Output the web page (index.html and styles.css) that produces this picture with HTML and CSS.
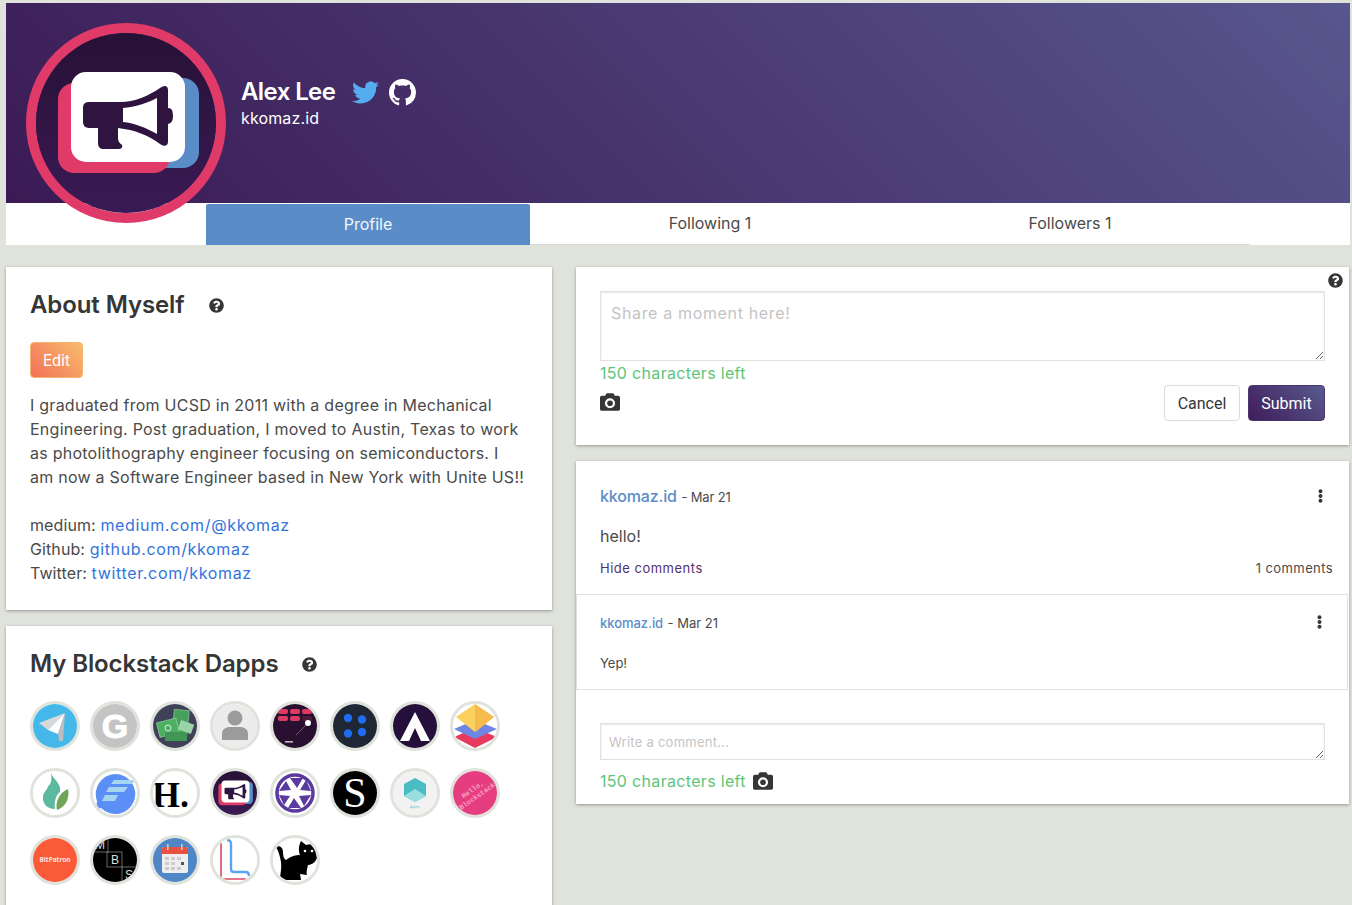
FILE: index.html
```html
<!DOCTYPE html>
<html lang="en">
<head>
  <meta charset="UTF-8" />
  <meta name="viewport" content="width=device-width, initial-scale=1.0" />
  <title>Alex Lee - Profile</title>
  <link rel="stylesheet" href="styles.css">
</head>
<body>

<!-- Shared icons -->
<svg class="sprite" aria-hidden="true">
  <symbol id="i-question" viewBox="0 0 512 512"><path d="M504 256c0 136.997-111.043 248-248 248S8 392.997 8 256C8 119.083 119.043 8 256 8s248 111.083 248 248zM262.655 90c-54.497 0-89.255 22.957-116.549 63.758-3.536 5.286-2.353 12.415 2.715 16.258l34.699 26.31c5.205 3.947 12.621 3.008 16.665-2.122 17.864-22.658 30.113-35.797 57.303-35.797 20.429 0 45.698 13.148 45.698 32.958 0 14.976-12.363 22.667-32.534 33.976C247.128 238.528 216 254.941 216 296v4c0 6.627 5.373 12 12 12h56c6.627 0 12-5.373 12-12v-1.333c0-28.462 83.186-29.647 83.186-106.667 0-58.002-60.165-102-116.531-102zM256 338c-25.365 0-46 20.635-46 46 0 25.364 20.635 46 46 46s46-20.636 46-46c0-25.365-20.635-46-46-46z"/></symbol>
  <symbol id="i-camera" viewBox="0 0 512 512"><path fill-rule="evenodd" d="M512 144v288c0 26.500-21.500 48-48 48H48c-26.500 0-48-21.500-48-48V144c0-26.500 21.500-48 48-48h88l12.300-32.900c7-18.700 24.900-31.100 44.900-31.100h125.500c20 0 37.900 12.400 44.900 31.100L376 96h88c26.500 0 48 21.500 48 48zM386 288a130 130 0 1 0-260 0a130 130 0 1 0 260 0z"/><circle cx="256" cy="288" r="72"/></symbol>
  <symbol id="i-dots" viewBox="0 0 192 512"><path d="M96 184c39.800 0 72 32.200 72 72s-32.200 72-72 72-72-32.200-72-72 32.200-72 72-72zM24 80c0 39.800 32.200 72 72 72s72-32.200 72-72S135.800 8 96 8 24 40.200 24 80zm0 352c0 39.800 32.200 72 72 72s72-32.200 72-72-32.200-72-72-72-72 32.200-72 72z"/></symbol>
  <linearGradient id="avatar-bg" x1="0" y1="0" x2="0" y2="1"><stop offset="0" stop-color="#271136"/><stop offset="1" stop-color="#3a1a54"/></linearGradient>
  <symbol id="i-logo" viewBox="36 33 180 180">
    <rect x="36" y="33" width="180" height="180" fill="url(#avatar-bg)"/>
    <rect x="110" y="78" width="89" height="90" rx="16" fill="#5a8dc8"/>
    <rect x="58" y="83" width="112" height="90" rx="16" fill="#e03a68"/>
    <rect x="71" y="72" width="114" height="90" rx="15" fill="#fff"/>
    <path fill="#2f1440" fill-rule="evenodd" d="M89 102H120C135 102 148 96 160 88C164 85 168 85 168 90V108C172 108 173 111 173 116C173 120 172 123 168 124V142C168 146 164 147 160 144C148 135 135 130 118 128V138C118 142 120 143 122 145C123 148 121 149 118 149H104C100 149 98 147 98 143V128H89C85 128 83 125 83 122V108C83 104 85 102 89 102ZM123 108C135 107 148 103 157 98V134C146 128 135 123 123 122Z"/>
  </symbol>
</svg>

<div class="page">

  <!-- Header -->
  <header class="profile-header">
    <div class="profile-info">
      <div class="profile-name">
        <h1>Alex Lee</h1>
        <svg class="twitter" viewBox="0 0 512 512"><path d="M459.370 151.716c.325 4.548.325 9.097.325 13.645 0 138.720-105.583 298.558-298.558 298.558-59.452 0-114.680-17.219-161.137-47.106 8.447.974 16.568 1.299 25.340 1.299 49.055 0 94.213-16.568 130.274-44.832-46.132-.975-84.792-31.188-98.112-72.772 6.498.974 12.995 1.624 19.818 1.624 9.421 0 18.843-1.300 27.614-3.573-48.081-9.747-84.143-51.980-84.143-102.985v-1.299c13.969 7.797 30.214 12.670 47.431 13.319-28.264-18.843-46.781-51.005-46.781-87.391 0-19.492 5.197-37.360 14.294-52.954 51.655 63.675 129.300 105.258 216.365 109.807-1.624-7.797-2.599-15.918-2.599-24.040 0-57.828 46.782-104.934 104.934-104.934 30.213 0 57.502 12.670 76.670 33.137 23.715-4.548 46.456-13.320 66.599-25.340-7.798 24.366-24.366 44.833-46.132 57.827 21.117-2.273 41.584-8.122 60.426-16.243-14.292 20.791-32.161 39.308-52.628 54.253z"/></svg>
        <svg class="github" viewBox="0 0 16 16"><path d="M8 0C3.580 0 0 3.580 0 8c0 3.540 2.290 6.530 5.470 7.590.400.070.550-.170.550-.380 0-.190-.010-.820-.010-1.490-2.010.370-2.530-.490-2.690-.940-.090-.230-.480-.940-.820-1.130-.280-.150-.680-.520-.010-.530.630-.010 1.080.580 1.230.820.720 1.210 1.870.870 2.330.660.070-.520.280-.870.510-1.070-1.780-.200-3.640-.890-3.640-3.950 0-.870.310-1.590.820-2.150-.080-.200-.360-1.020.080-2.120 0 0 .670-.210 2.200.820.640-.180 1.320-.270 2-.270.680 0 1.360.090 2 .270 1.530-1.040 2.200-.820 2.200-.820.440 1.100.160 1.920.080 2.120.510.560.820 1.270.820 2.150 0 3.070-1.870 3.750-3.650 3.950.290.250.540.730.540 1.480 0 1.070-.010 1.930-.010 2.200 0 .210.150.460.550.380A8.013 8.013 0 0016 8c0-4.420-3.580-8-8-8z"/></svg>
      </div>
      <div class="profile-id">kkomaz.id</div>
    </div>
  </header>

  <svg class="avatar" viewBox="0 0 180 180"><use href="#i-logo"/></svg>

  <!-- Tabs -->
  <nav class="tabs">
    <a class="tab active">Profile</a>
    <a class="tab">Following 1</a>
    <a class="tab">Followers 1</a>
  </nav>

  <div class="columns">

    <!-- Left column -->
    <div class="col-left">
      <section class="card about">
        <h2 class="card-title">About Myself <svg class="help"><use href="#i-question"/></svg></h2>
        <button class="btn btn-edit">Edit</button>
        <p class="bio">I graduated from UCSD in 2011 with a degree in Mechanical Engineering. Post graduation, I moved to Austin, Texas to work as photolithography engineer focusing on semiconductors. I am&nbsp;now a Software Engineer based in New York with Unite US!!</p>
        <p class="bio-links">
          medium: <a href="#">medium.com/@kkomaz</a><br>
          Github: <a href="#">github.com/kkomaz</a><br>
          Twitter: <a href="#">twitter.com/kkomaz</a>
        </p>
      </section>

      <section class="card dapps">
        <h2 class="card-title">My Blockstack Dapps <svg class="help"><use href="#i-question"/></svg></h2>
        <div class="dapp-grid">
          <!-- paper plane -->
          <svg class="dapp" viewBox="0 0 44 44"><rect width="44" height="44" fill="#45b8ea"/><path d="M6 19L32 9L15 26Z" fill="#d8d8d8"/><path d="M32 9L15 26L25 30Z" fill="#fff"/><path d="M32 9L25 30L26 37L30 37Z" fill="#bdbdbd"/></svg>
          <!-- G -->
          <svg class="dapp" viewBox="0 0 44 44"><rect width="44" height="44" fill="#c4c4c4"/><text class="g-mark" x="22" y="34" text-anchor="middle">G</text></svg>
          <!-- money -->
          <svg class="dapp" viewBox="0 0 44 44"><rect width="44" height="44" fill="#3e4158"/><rect x="20" y="6" width="15" height="27" fill="#45a05a" stroke="#b8dfc0" stroke-width=".5" transform="rotate(6 28 19)"/><rect x="5" y="16" width="20" height="15" fill="#4caf62" stroke="#b8dfc0" stroke-width=".5" transform="rotate(-14 16 24)"/><rect x="12" y="28" width="22" height="9" fill="#3f9655"/><rect x="26" y="18" width="14" height="10" fill="#9ad4a8" transform="rotate(20 33 23)"/><circle cx="15" cy="24" r="3" fill="none" stroke="#d8efdc"/></svg>
          <!-- person -->
          <svg class="dapp" viewBox="0 0 44 44"><rect width="44" height="44" fill="#ececec"/><circle cx="22" cy="14" r="7.500" fill="#9b9b9b"/><path d="M9 36V30C9 25 13 23 17 23H27C31 23 35 25 35 30V36Z" fill="#9b9b9b"/></svg>
          <!-- bricks -->
          <svg class="dapp" viewBox="0 0 44 44"><rect width="44" height="44" fill="#2a1030"/><g fill="#dc3a63"><rect x="5" y="5" width="10" height="5" rx="2"/><rect x="17" y="5" width="10" height="5" rx="2"/><rect x="29" y="5" width="10" height="5" rx="2"/><rect x="5" y="12" width="10" height="5" rx="2"/><rect x="17" y="12" width="10" height="5" rx="2"/></g><rect x="29" y="12" width="10" height="5" rx="2" fill="#4b1c3a"/><path d="M34 20L23 31" stroke="#6d5a70"/><circle cx="35" cy="19" r="3" fill="#fff"/><rect x="12" y="37" width="8" height="1.600" fill="#bbb"/></svg>
          <!-- four dots -->
          <svg class="dapp" viewBox="0 0 44 44"><rect width="44" height="44" fill="#1e2733"/><g fill="#1f6cf0"><circle cx="15" cy="14" r="4.200"/><circle cx="29" cy="15.500" r="4.200"/><circle cx="15" cy="29.500" r="4.200"/><circle cx="29" cy="28" r="4.200"/></g></svg>
          <!-- A mark -->
          <svg class="dapp" viewBox="0 0 44 44"><rect width="44" height="44" fill="#24103a"/><path d="M22 8L37 37H28L22 24L16 37H7Z" fill="#fff"/></svg>
          <!-- layers -->
          <svg class="dapp" viewBox="0 0 44 44"><rect width="44" height="44" fill="#fff"/><path d="M22 24L44 33L22 44L1 33Z" fill="#e8395f"/><path d="M22 16L44 25L22 35L1 25Z" fill="#6f87e2"/><path d="M22 0L41 13L22 28L3 13Z" fill="#fbd05c"/><path d="M22 0L41 13L22 28Z" fill="#f6bb4d"/></svg>
          <!-- flame -->
          <svg class="dapp" viewBox="0 0 44 44"><rect width="44" height="44" fill="#fff"/><path d="M18 2C20 8 29 13 27 21C23 24 21 30 22 38C14 38 9 32 10 25C11 20 14 20 15 15C18 14 19 8 18 2Z" fill="#5cb89f"/><path d="M35 18C37 26 33 36 24 39C22 31 26 22 35 18Z" fill="#6fa556"/></svg>
          <!-- blue chat -->
          <svg class="dapp" viewBox="0 0 44 44"><rect width="44" height="44" fill="#fff"/><path d="M22 3A20 20 0 1 1 8 37L3 39L4 30A20 20 0 0 1 22 3Z" fill="#5c8ff5"/><g fill="#a5d5f0"><path d="M21 9H44L39 13H18Z"/><path d="M16 16H35L31 21H13Z"/><path d="M12 24H25L22 30H9Z"/></g></svg>
          <!-- H. -->
          <svg class="dapp" viewBox="0 0 44 44"><rect width="44" height="44" fill="#fff"/><text class="h-mark" x="-1" y="36">H.</text></svg>
          <!-- own logo -->
          <svg class="dapp" viewBox="0 0 180 180"><use href="#i-logo"/></svg>
          <!-- aperture -->
          <svg class="dapp" viewBox="0 0 44 44"><rect width="44" height="44" fill="#fff"/><circle cx="22" cy="22" r="18" fill="none" stroke="#5b3aa0" stroke-width="3.500"/><g fill="#5b3aa0"><path d="M17 7H30L24 17Z"/><path d="M33 9L38 20L27 19Z"/><path d="M38 24L31 35L26 25Z"/><path d="M28 37H15L21 27Z"/><path d="M11 34L6 24L17 25Z"/><path d="M6 20L13 10L18 19Z"/></g></svg>
          <!-- S -->
          <svg class="dapp" viewBox="0 0 44 44"><rect width="44" height="44" fill="#000"/><text class="s-mark" x="22" y="36" text-anchor="middle">S</text></svg>
          <!-- Apex -->
          <svg class="dapp" viewBox="0 0 44 44"><rect width="44" height="44" fill="#f2f2f2"/><path d="M22 7L33 13V25L22 31L11 25V13Z" fill="#4cbcc4"/><path d="M22 18L33 25L22 31L11 25Z" fill="#9adfe0"/><text class="apex-mark" x="22" y="37" text-anchor="middle">Apex</text></svg>
          <!-- Hello Blockstack -->
          <svg class="dapp" viewBox="0 0 44 44"><rect width="44" height="44" fill="#e63d80"/><g transform="rotate(-35 22 22)"><text class="hello-mark" x="22" y="20" text-anchor="middle">Hello,</text><text class="hello-mark" x="22" y="28" text-anchor="middle">Blockstack</text></g></svg>
          <!-- BitPatron -->
          <svg class="dapp" viewBox="0 0 44 44"><rect width="44" height="44" fill="#fb5a38"/><text class="bit-mark" x="22" y="24" text-anchor="middle">BitPatron</text></svg>
          <!-- MBS -->
          <svg class="dapp" viewBox="0 0 44 44"><rect width="44" height="44" fill="#000"/><g fill="none" stroke="#aaa" stroke-width=".6"><rect x="0" y="0" width="15" height="14"/><rect x="14" y="14" width="15" height="15"/><rect x="29" y="29" width="15" height="15"/></g><text class="mbs-mark" x="7" y="11" text-anchor="middle">M</text><text class="mbs-mark" x="22" y="26" text-anchor="middle">B</text><text class="mbs-mark" x="36" y="41" text-anchor="middle">S</text></svg>
          <!-- calendar -->
          <svg class="dapp" viewBox="0 0 44 44"><rect width="44" height="44" fill="#4f86c6"/><rect x="9" y="9" width="26" height="26" rx="2" fill="#eee"/><path d="M9 16V11A2 2 0 0 1 11 9H33A2 2 0 0 1 35 11V16Z" fill="#e8503f"/><rect x="14" y="6" width="1.600" height="6" fill="#ccc"/><rect x="28" y="6" width="1.600" height="6" fill="#ccc"/><g fill="#ccc"><rect x="12" y="19" width="4" height="3"/><rect x="18" y="19" width="4" height="3"/><rect x="24" y="19" width="4" height="3"/><rect x="12" y="24" width="4" height="3"/><rect x="18" y="24" width="4" height="3"/><rect x="12" y="29" width="4" height="3"/><rect x="18" y="29" width="4" height="3"/><rect x="24" y="29" width="4" height="3"/></g><rect x="28" y="24" width="3" height="3" fill="#555"/></svg>
          <!-- L -->
          <svg class="dapp" viewBox="0 0 44 44"><rect width="44" height="44" fill="#fff"/><path d="M8 5V41H33" fill="none" stroke="#d8476a" stroke-width="1.600"/><path d="M14 2C17 2 18 3 18 6V31C18 33 19 34 21 34H33C35 34 36 35 36 38" fill="none" stroke="#5aa5f0" stroke-width="2.400"/></svg>
          <!-- cat -->
          <svg class="dapp" viewBox="0 0 44 44"><rect width="44" height="44" fill="#fff"/><path d="M3 9C7 7 10 10 10 14C10 18 11 21 13 22C18 18 23 17 27 17C25 12 26 7 28 3L33 7C36 6 39 6 42 7L44 20C42 25 38 27 35 27C34 31 33 35 34 37L27 36L28 42H7C7 36 9 30 8 24C7 19 6 14 3 9Z" fill="#000"/><circle cx="32" cy="13" r="1.300" fill="#fff"/><circle cx="39" cy="13" r="1.300" fill="#fff"/></svg>
        </div>
      </section>
    </div>

    <!-- Right column -->
    <div class="col-right">
      <section class="card composer">
        <svg class="help help-corner"><use href="#i-question"/></svg>
        <textarea class="moment-input" placeholder="Share a moment here!"></textarea>
        <div class="chars-left">150 characters left</div>
        <div class="composer-actions">
          <svg class="camera"><use href="#i-camera"/></svg>
          <div class="buttons">
            <button class="btn btn-cancel">Cancel</button>
            <button class="btn btn-submit">Submit</button>
          </div>
        </div>
      </section>

      <section class="card post">
        <div class="post-body">
          <div class="post-head">
            <div><a class="post-author">kkomaz.id</a> <span class="post-date">- Mar 21</span></div>
            <svg class="dots"><use href="#i-dots"/></svg>
          </div>
          <p class="post-text">hello!</p>
          <div class="post-foot">
            <a class="hide-comments">Hide comments</a>
            <span class="comment-count">1 comments</span>
          </div>
        </div>

        <div class="comment">
          <div class="comment-head">
            <div><a class="comment-author">kkomaz.id</a> <span class="comment-date">- Mar 21</span></div>
            <svg class="dots"><use href="#i-dots"/></svg>
          </div>
          <p class="comment-text">Yep!</p>
        </div>

        <div class="reply">
          <textarea class="comment-input" placeholder="Write a comment..."></textarea>
          <div class="reply-foot">
            <span class="chars-left">150 characters left</span>
            <svg class="camera"><use href="#i-camera"/></svg>
          </div>
        </div>
      </section>
    </div>

  </div>
</div>

</body>
</html>
```

FILE: styles.css
```css
/* General Styles */
html, body {
  height: 100%;
}

body {
  margin: 0;
  height: 905px;
  overflow: hidden;
  background-color: #e0e3dc;
  color: #363636;
  font-family: Inter, "Noto Sans", sans-serif;
}

.sprite {
  position: absolute;
  width: 0;
  height: 0;
}

.page {
  position: relative;
  padding: 3px 2px 0 6px;
}

/* Header */
.profile-header {
  display: flex;
  align-items: flex-start;
  height: 200px;
  padding-left: 235px;
  box-sizing: border-box;
  background: linear-gradient(45deg, #3b1a54, #58568e);
}

.profile-info {
  padding-top: 73px;
  color: white;
}

.profile-name {
  display: flex;
  align-items: center;
}

.profile-name h1 {
  margin: 0;
  font-size: 24px;
  line-height: 32px;
  font-weight: 600;
  letter-spacing: -0.6px;
}

.twitter {
  width: 27px;
  height: 27px;
  margin-left: 17px;
  fill: #55acee;
}

.github {
  width: 27px;
  height: 27px;
  margin-left: 10px;
  fill: white;
}

.profile-id {
  font-size: 16px;
  line-height: 20px;
  letter-spacing: 0.13px;
}

.avatar {
  position: absolute;
  left: 26px;
  top: 23px;
  width: 200px;
  height: 200px;
  box-sizing: border-box;
  border: 10px solid #e03a68;
  border-radius: 50%;
}

/* Tabs */
.tabs {
  display: flex;
  height: 42px;
  padding-left: 200px;
  background-color: white;
}

.tab {
  display: flex;
  align-items: center;
  justify-content: center;
  width: 360px;
  box-sizing: border-box;
  padding-bottom: 2px;
  border-bottom: 1px solid #dbdbdb;
  font-size: 16px;
  color: #4a4a4a;
}

.tab.active {
  width: 324px;
  border: 0;
  border-radius: 2px 2px 0 0;
  margin-top: 1px;
  background-color: #5a8dc8;
  color: #f2f6fb;
}

/* Columns */
.columns {
  display: flex;
  gap: 24px;
  margin-top: 22px;
  align-items: flex-start;
}

.col-left {
  display: flex;
  flex-direction: column;
  gap: 16px;
  width: 546px;
  flex-shrink: 0;
}

.col-right {
  display: flex;
  flex-direction: column;
  gap: 16px;
  width: 773px;
}

.card {
  position: relative;
  box-sizing: border-box;
  background-color: white;
  box-shadow: 0 1px 3px rgba(10, 10, 10, 0.35);
}

.card-title {
  display: flex;
  align-items: center;
  margin: 0;
  font-size: 24px;
  line-height: 32px;
  font-weight: 600;
  letter-spacing: -0.1px;
  color: #363636;
}

.help {
  width: 15px;
  height: 15px;
  margin-left: 24px;
  fill: #363636;
}

.help-corner {
  position: absolute;
  top: 6px;
  right: 6px;
  margin: 0;
}

.btn {
  font-family: Roboto, sans-serif;
  font-size: 16px;
  border-radius: 4px;
  cursor: pointer;
}

/* About card */
.about {
  height: 343px;
  padding: 22px 24px;
}

.btn-edit {
  display: block;
  width: 53px;
  height: 36px;
  margin-top: 21px;
  padding: 0;
  border: 1px solid #f7b56b;
  background: linear-gradient(45deg, #f27059, #f8bc6b);
  color: white;
}

.bio,
.bio-links {
  margin: 0;
  font-size: 16px;
  line-height: 24px;
  letter-spacing: 0.25px;
  color: #4a4a4a;
}

.bio {
  margin-top: 15px;
}

.bio-links {
  margin-top: 24px;
  letter-spacing: 0.1px;
}

.bio-links a {
  letter-spacing: 0.65px;
  color: #3273dc;
  text-decoration: none;
}

/* Dapps card */
.dapps {
  height: 320px;
  padding: 22px 24px;
}

.dapp-grid {
  display: grid;
  grid-template-columns: repeat(8, 50px);
  grid-auto-rows: 50px;
  column-gap: 10px;
  row-gap: 17px;
  margin-top: 21px;
}

.dapp {
  width: 50px;
  height: 50px;
  box-sizing: border-box;
  border: 3px solid #e0e3dc;
  border-radius: 50%;
}

.g-mark {
  font-family: "Liberation Sans", sans-serif;
  font-size: 34px;
  font-weight: 700;
  fill: white;
  stroke: white;
}

.h-mark {
  font-family: "Liberation Serif", serif;
  font-size: 36px;
  font-weight: 700;
  fill: #000;
}

.s-mark {
  font-family: "Liberation Serif", serif;
  font-size: 42px;
  fill: white;
}

.apex-mark {
  font-family: Roboto, sans-serif;
  font-size: 3.5px;
  letter-spacing: .5px;
  fill: #4cbcc4;
}

.hello-mark {
  font-family: "Liberation Mono", monospace;
  font-size: 7px;
  font-weight: 700;
  fill: #f5a3c3;
}

.bit-mark {
  font-family: "Noto Sans", sans-serif;
  font-size: 6.5px;
  font-weight: 700;
  fill: #fde3dc;
}

.mbs-mark {
  font-family: "Liberation Sans", sans-serif;
  font-size: 12px;
  fill: #ddd;
}

/* Composer */
textarea {
  display: block;
  width: 100%;
  box-sizing: border-box;
  border: 1px solid #e0e3dc;
  box-shadow: inset 0 1px 2px rgba(10, 10, 10, 0.1);
  font-family: Inter, "Noto Sans", sans-serif;
  color: #363636;
}

textarea::placeholder {
  color: #c4c4c4;
}

.composer {
  height: 178px;
  padding: 24px 24px 0;
}

.moment-input {
  height: 70px;
  padding: 11px 10px;
  font-size: 16px;
  letter-spacing: 0.65px;
}

.chars-left {
  font-size: 16px;
  line-height: 24px;
  letter-spacing: 0.32px;
  color: #5ec47a;
}

.composer-actions {
  display: flex;
  justify-content: space-between;
  align-items: flex-start;
}

.composer-actions .camera {
  margin-top: 7px;
}

.camera {
  width: 20px;
  height: 20px;
  fill: #363636;
}

.buttons {
  display: flex;
  gap: 8px;
}

.btn-cancel {
  width: 76px;
  height: 36px;
  padding: 0;
  border: 1px solid #dbdbdb;
  background-color: white;
  color: #363636;
}

.btn-submit {
  width: 77px;
  height: 36px;
  padding: 0;
  border: 1px solid #4a3570;
  background: linear-gradient(45deg, #401c5a, #585a8e);
  color: white;
}

/* Post */
.post {
  height: 343px;
}

.post-body {
  padding: 25px 16px 0 24px;
  height: 133px;
  box-sizing: border-box;
}

.post-head {
  display: flex;
  justify-content: space-between;
  align-items: center;
  padding-right: 9px;
}

.post-author {
  font-size: 16px;
  font-weight: 500;
  letter-spacing: -0.15px;
  color: #5a8dc8;
}

.post-date,
.comment-date {
  font-size: 13px;
  color: #4a4a4a;
}

.post-date {
  letter-spacing: -0.15px;
}

.dots {
  width: 7px;
  height: 14px;
  fill: #363636;
}

.post-text {
  margin: 18px 0 0;
  font-size: 16px;
  line-height: 24px;
  color: #4a4a4a;
}

.post-foot {
  display: flex;
  justify-content: space-between;
  align-items: center;
  margin-top: 12px;
  font-size: 13px;
}

.hide-comments {
  letter-spacing: 0.5px;
  color: #54306f;
}

.comment-count {
  letter-spacing: 0.4px;
  color: #4a4a4a;
}

.comment {
  height: 96px;
  box-sizing: border-box;
  margin-right: 1px;
  padding: 17px 24px 0 23px;
  border: 1px solid #e0e3dc;
}

.comment-head {
  display: flex;
  justify-content: space-between;
  align-items: center;
}

.comment-author {
  font-size: 13px;
  font-weight: 500;
  letter-spacing: -0.05px;
  color: #5a8dc8;
}

.comment-text {
  margin: 21px 0 0;
  font-size: 13px;
  line-height: 20px;
  color: #4a4a4a;
}

.reply {
  padding: 33px 24px 0;
}

.comment-input {
  height: 37px;
  padding: 10px 8px;
  font-size: 13px;
  letter-spacing: 0.25px;
}

.reply-foot {
  display: flex;
  align-items: center;
  gap: 7px;
  margin-top: 9px;
}
```
